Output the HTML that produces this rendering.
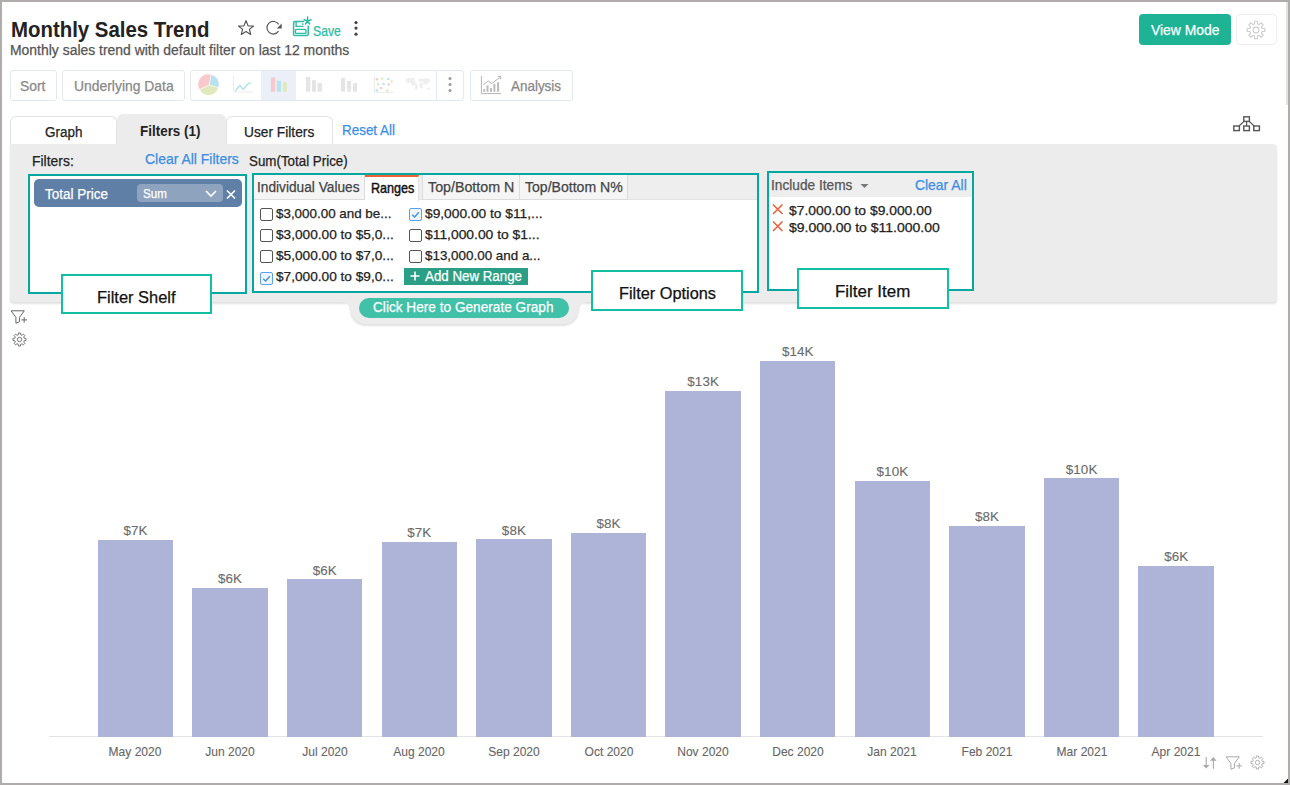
<!DOCTYPE html>
<html><head><meta charset="utf-8"><style>
html,body{margin:0;padding:0;}
body{width:1290px;height:785px;position:relative;overflow:hidden;background:#fff;font-family:"Liberation Sans", sans-serif;}
.t{position:absolute;white-space:nowrap;line-height:1;-webkit-text-stroke:0.25px currentColor;}
.c{text-align:center;}
#frame{position:absolute;left:0;top:0;width:1290px;height:785px;box-sizing:border-box;border:2px solid #b1acac;pointer-events:none;}
</style></head><body>
<div class="t" style="left:11px;top:18.00px;font-size:22.86px;color:#222;font-weight:bold;letter-spacing:0.000px;transform:scaleX(0.8925);transform-origin:0 0;-webkit-text-stroke:0;">Monthly Sales Trend</div>
<div class="t" style="left:10px;top:42.70px;font-size:14.29px;color:#555;font-weight:normal;letter-spacing:0.000px;transform:scaleX(0.9758);transform-origin:0 0;">Monthly sales trend with default filter on last 12 months</div>
<svg style="position:absolute;left:232px;top:15px" width="28" height="25" viewBox="232 15 28 25"><path d="M246 20.6 L248.1 25.9 L253.5 26 L249.4 29.4 L250.7 34.4 L246 31.5 L241.3 34.4 L242.6 29.4 L238.5 26 L243.9 25.9 Z" fill="none" stroke="#555" stroke-width="1.2" stroke-linejoin="round"/></svg>
<svg style="position:absolute;left:260px;top:17px" width="28" height="22" viewBox="260 17 28 22"><path d="M278.5 31.2 A6.3 6.3 0 1 1 278.6 24.4" fill="none" stroke="#555" stroke-width="1.2"/><path d="M281.7 23.6 L281.7 28.6 L276.8 28.6 Z" fill="#555"/></svg>
<svg style="position:absolute;left:288px;top:12px" width="28" height="28" viewBox="288 12 28 28"><path d="M304.2 21.6 H294.6 Q293.6 21.6 293.6 22.6 V34.4 Q293.6 35.4 294.6 35.4 H307.2 Q308.2 35.4 308.2 34.4 V25.4" fill="none" stroke="#2cbca5" stroke-width="1.5"/><path d="M296.1 21.6 V26.4 H303.6" fill="none" stroke="#2cbca5" stroke-width="1.4"/><circle cx="302.7" cy="24.1" r="0.9" fill="#2cbca5"/><rect x="295.4" y="29.4" width="10.6" height="4" rx="1" fill="none" stroke="#2cbca5" stroke-width="1.4"/><path d="M307.6 17.1 V21 M307.6 21 L304.1 19.8 M307.6 21 L311.1 19.8 M307.6 21 L305.5 24 M307.6 21 L309.7 24" stroke="#2cbca5" stroke-width="1.5" stroke-linecap="round"/></svg>
<div class="t" style="left:313px;top:24.00px;font-size:14.14px;color:#2cbca5;font-weight:normal;letter-spacing:0.000px;transform:scaleX(0.8656);transform-origin:0 0;">Save</div>
<svg style="position:absolute;left:353px;top:20px" width="6" height="17" viewBox="0 0 6 17"><circle cx="3" cy="2.6" r="1.6" fill="#444"/><circle cx="3" cy="8.1" r="1.6" fill="#444"/><circle cx="3" cy="14.2" r="1.6" fill="#444"/></svg>
<div style="position:absolute;left:1139px;top:14px;width:92px;height:31px;background:#1db394;border-radius:4px"></div>
<div class="t" style="left:1150.6px;top:23.00px;font-size:14.29px;color:#fff;font-weight:normal;letter-spacing:0.000px;transform:scaleX(0.9725);transform-origin:0 0;">View Mode</div>
<div style="position:absolute;left:1236px;top:14px;width:41px;height:31px;border:1px solid #eceef5;border-radius:4px;box-sizing:border-box"></div>
<svg style="position:absolute;left:1245.2px;top:18.6px" width="22" height="22" viewBox="0 0 22 22"><path d="M17.11 9.48 L19.78 9.54 L19.78 12.46 L17.11 12.52 L16.40 14.25 L18.24 16.17 L16.17 18.24 L14.25 16.40 L12.52 17.11 L12.46 19.78 L9.54 19.78 L9.48 17.11 L7.75 16.40 L5.83 18.24 L3.76 16.17 L5.60 14.25 L4.89 12.52 L2.22 12.46 L2.22 9.54 L4.89 9.48 L5.60 7.75 L3.76 5.83 L5.83 3.76 L7.75 5.60 L9.48 4.89 L9.54 2.22 L12.46 2.22 L12.52 4.89 L14.25 5.60 L16.17 3.76 L18.24 5.83 L16.40 7.75 Z" fill="none" stroke="#cdcdcd" stroke-width="1.1" stroke-linejoin="round"/><circle cx="11" cy="11" r="2.9" fill="none" stroke="#cdcdcd" stroke-width="1.1"/></svg>
<div style="position:absolute;left:10px;top:70px;width:47px;height:31px;border:1px solid #e3e8f3;border-radius:3px;box-sizing:border-box;background:#fff"></div>
<div class="t" style="left:20.2px;top:78.50px;font-size:14.43px;color:#888;font-weight:normal;letter-spacing:0.000px;transform:scaleX(0.9635);transform-origin:0 0;">Sort</div>
<div style="position:absolute;left:62px;top:70px;width:123px;height:31px;border:1px solid #e3e8f3;border-radius:3px;box-sizing:border-box;background:#fff"></div>
<div class="t" style="left:73.6px;top:78.50px;font-size:14.43px;color:#888;font-weight:normal;letter-spacing:0.000px;transform:scaleX(0.9635);transform-origin:0 0;">Underlying Data</div>
<div style="position:absolute;left:190px;top:70px;width:274px;height:31px;border:1px solid #e3e8f3;border-radius:3px;box-sizing:border-box;background:#fff"></div>
<div style="position:absolute;left:261px;top:71px;width:35px;height:29px;background:#eaeff8"></div>
<div style="position:absolute;left:436px;top:71px;width:1px;height:29px;background:#e3e8f3"></div>
<svg style="position:absolute;left:196px;top:72px" width="26" height="26" viewBox="196 72 26 26"><path d="M209.3 84.8 L210.9 74.7 A9.9 9.9 0 0 1 218.2 87.8 Z" fill="#b8e2ee"/><path d="M209.3 84.8 L218.2 87.8 A9.9 9.9 0 0 1 199.8 89.4 Z" fill="#dfe9bb"/><path d="M209.3 84.8 L199.8 89.4 A9.9 9.9 0 0 1 210.9 74.7 Z" fill="#f8c8cb"/><path d="M209.3 84.8 L210.9 74.7 M209.3 84.8 L218.2 87.8 M209.3 84.8 L199.8 89.4" stroke="#fff" stroke-width="0.6"/></svg>
<svg style="position:absolute;left:230px;top:72px" width="26" height="24" viewBox="230 72 26 24"><path d="M233.4 76 V92.1 H252.9" fill="none" stroke="#ececec" stroke-width="1"/><path d="M235 91.2 L240 85.4 L243.2 89.4 L247.5 84.3 L250.8 82.4" fill="none" stroke="#b8e2ee" stroke-width="1.6" stroke-linejoin="round"/></svg>
<svg style="position:absolute;left:266px;top:72px" width="26" height="24" viewBox="266 72 26 24"><rect x="270.9" y="77.5" width="4.3" height="14.2" fill="#f8c8cb"/><rect x="276.8" y="80.8" width="4.2" height="10.9" fill="#b8e2ee"/><rect x="282.8" y="82.3" width="4" height="9.4" fill="#dfe9bb"/></svg>
<svg style="position:absolute;left:300px;top:72px" width="26" height="24" viewBox="300 72 26 24"><rect x="305.9" y="76.9" width="4.4" height="14.8" fill="#e4e4e4"/><rect x="311.9" y="80.2" width="4.2" height="11.5" fill="#e4e4e4"/><rect x="317.6" y="82.9" width="4.3" height="8.8" fill="#e4e4e4"/><path d="M305.9 82 H310.3 M305.9 86.5 H310.3 M311.9 85 H316.1 M317.6 87 H321.9" stroke="#ebebeb" stroke-width="0.6"/></svg>
<svg style="position:absolute;left:335px;top:72px" width="26" height="24" viewBox="335 72 26 24"><rect x="341.1" y="78" width="4" height="13.7" fill="#e4e4e4"/><rect x="347.2" y="81" width="3.8" height="10.7" fill="#e4e4e4"/><rect x="353" y="83" width="4" height="8.7" fill="#e4e4e4"/><path d="M342.9 84.3 L349.1 90.2 L354.8 84.3" stroke="#f0f0f0" stroke-width="0.8" fill="none"/></svg>
<svg style="position:absolute;left:370px;top:72px" width="26" height="24" viewBox="370 72 26 24"><path d="M374.4 76.1 V92.4 H393.4" fill="none" stroke="#e8e8e8" stroke-width="0.9"/><circle cx="376.9" cy="79.2" r="1.25" fill="#f8c8cb"/><circle cx="382.2" cy="78.6" r="1.25" fill="#dfe9bb"/><circle cx="388.3" cy="78.9" r="1.25" fill="#b8e2ee"/><circle cx="391.7" cy="81.6" r="1.25" fill="#dfe9bb"/><circle cx="378.2" cy="84.3" r="1.25" fill="#dfe9bb"/><circle cx="383.6" cy="84" r="1.25" fill="#b8e2ee"/><circle cx="388.7" cy="84.6" r="1.25" fill="#f8c8cb"/><circle cx="381.1" cy="87.9" r="1.25" fill="#f8c8cb"/><circle cx="376.9" cy="90.2" r="1.25" fill="#b8e2ee"/><circle cx="387.4" cy="90.5" r="1.25" fill="#dfe9bb"/></svg>
<svg style="position:absolute;left:403px;top:74px" width="30" height="20" viewBox="403 74 30 20"><ellipse cx="410.5" cy="80.5" rx="4.8" ry="2.6" fill="#efefef"/><ellipse cx="413.5" cy="83.5" rx="2.5" ry="2.2" fill="#efefef"/><ellipse cx="416.3" cy="86.8" rx="1.3" ry="3.2" fill="#efefef"/><ellipse cx="412" cy="78.6" rx="2.5" ry="0.8" fill="#efefef"/><ellipse cx="420.5" cy="80.2" rx="2.2" ry="1.6" fill="#efefef"/><ellipse cx="421.2" cy="85.4" rx="1.8" ry="3.0" fill="#efefef"/><ellipse cx="426" cy="80.3" rx="4.2" ry="2.2" fill="#efefef"/><ellipse cx="425.5" cy="83.2" rx="2.6" ry="1.2" fill="#efefef"/><ellipse cx="428.5" cy="88.6" rx="1.6" ry="1.2" fill="#efefef"/></svg>
<svg style="position:absolute;left:445px;top:74px" width="10" height="20" viewBox="445 74 10 20"><circle cx="450" cy="78.5" r="1.5" fill="#9a9a9a"/><circle cx="450" cy="84.5" r="1.5" fill="#9a9a9a"/><circle cx="450" cy="90.5" r="1.5" fill="#9a9a9a"/></svg>
<div style="position:absolute;left:469.5px;top:70.4px;width:103.1px;height:30.2px;border:1px solid #e3e8f3;border-radius:3px;box-sizing:border-box;background:#fff"></div>
<svg style="position:absolute;left:478px;top:73px" width="26" height="24" viewBox="478 73 26 24"><path d="M481.4 76.1 V93.6 H500.9" fill="none" stroke="#b4b4b4" stroke-width="1"/><path d="M483.4 84.7 L488.3 81 L491.6 83.5 L500.3 77.2 M497.8 76.6 H500.7 V79.3" fill="none" stroke="#b4b4b4" stroke-width="1"/><rect x="483.2" y="89.2" width="2" height="2.6" fill="#bbb"/><rect x="486.5" y="85.5" width="2" height="6.3" fill="#bbb"/><rect x="490" y="88" width="2" height="3.8" fill="#bbb"/><rect x="493.4" y="83.9" width="2" height="7.9" fill="#bbb"/><rect x="497.1" y="82.2" width="2" height="9.6" fill="#bbb"/></svg>
<div class="t" style="left:511.1px;top:78.90px;font-size:14.14px;color:#888;font-weight:normal;letter-spacing:0.000px;transform:scaleX(0.9515);transform-origin:0 0;">Analysis</div>
<div style="position:absolute;left:10px;top:115.5px;width:107px;height:30px;background:#fff;border:1px solid #e2e2e2;border-bottom:none;border-radius:6px 6px 0 0;box-sizing:border-box"></div>
<div style="position:absolute;left:117px;top:114px;width:108.5px;height:31px;background:#ececec;border-radius:6px 6px 0 0"></div>
<div style="position:absolute;left:226px;top:115.5px;width:107px;height:30px;background:#fff;border:1px solid #e2e2e2;border-bottom:none;border-radius:6px 6px 0 0;box-sizing:border-box"></div>
<div class="t" style="left:44.5px;top:125.20px;font-size:14.43px;color:#222;font-weight:normal;letter-spacing:0.000px;transform:scaleX(0.9350);transform-origin:0 0;">Graph</div>
<div class="t" style="left:140px;top:123.80px;font-size:14.86px;color:#222;font-weight:bold;letter-spacing:0.000px;transform:scaleX(0.9045);transform-origin:0 0;-webkit-text-stroke:0;">Filters (1)</div>
<div class="t" style="left:244px;top:123.90px;font-size:15.0px;color:#222;font-weight:normal;letter-spacing:0.000px;transform:scaleX(0.9169);transform-origin:0 0;">User Filters</div>
<div class="t" style="left:341.9px;top:122.80px;font-size:14.86px;color:#3a8ee6;font-weight:normal;letter-spacing:0.000px;transform:scaleX(0.9038);transform-origin:0 0;">Reset All</div>
<svg style="position:absolute;left:1230px;top:112px" width="34" height="22" viewBox="0 0 34 22"><rect x="13.8" y="4.8" width="5.6" height="4.6" fill="none" stroke="#555" stroke-width="1.4"/><rect x="3.8" y="14" width="5.6" height="4.6" fill="none" stroke="#555" stroke-width="1.4"/><rect x="13.8" y="14" width="5.6" height="4.6" fill="none" stroke="#555" stroke-width="1.4"/><rect x="23.8" y="14" width="5.6" height="4.6" fill="none" stroke="#555" stroke-width="1.4"/><path d="M16.6 9.4 V14 M14 9.4 L9 14 M19.2 9.4 L24.2 14" stroke="#555" stroke-width="1.2"/></svg>
<div style="position:absolute;left:10px;top:144px;width:1267px;height:158px;background:#ececec;border-radius:0 4px 4px 4px;box-shadow:0 2px 2px rgba(0,0,0,0.12)"></div>
<div style="position:absolute;left:350px;top:280px;width:229px;height:44px;background:#ececec;border-radius:0 0 16px 16px;box-shadow:0 2px 2px rgba(0,0,0,0.12)"></div>
<div style="position:absolute;left:344px;top:285px;width:241px;height:17px;background:#ececec"></div>
<div style="position:absolute;left:342px;top:301.5px;width:8px;height:8px;background:radial-gradient(circle 8px at 0 100%, rgba(236,236,236,0) 7.3px, #ececec 8px)"></div>
<div style="position:absolute;left:579px;top:301.5px;width:8px;height:8px;background:radial-gradient(circle 8px at 100% 100%, rgba(236,236,236,0) 7.3px, #ececec 8px)"></div>
<div style="position:absolute;left:359px;top:298px;width:210px;height:20px;background:#42c1a9;border-radius:10px"></div>
<div class="t" style="left:372.9px;top:300.20px;font-size:14.43px;color:#fff;font-weight:normal;letter-spacing:0.000px;transform:scaleX(0.9461);transform-origin:0 0;">Click Here to Generate Graph</div>
<div class="t" style="left:31.7px;top:154.20px;font-size:14.57px;color:#222;font-weight:normal;letter-spacing:0.000px;transform:scaleX(0.9563);transform-origin:0 0;">Filters:</div>
<div class="t" style="left:144.6px;top:151.60px;font-size:14.86px;color:#3a8ee6;font-weight:normal;letter-spacing:0.000px;transform:scaleX(0.9388);transform-origin:0 0;">Clear All Filters</div>
<div class="t" style="left:249.4px;top:153.80px;font-size:14.14px;color:#222;font-weight:normal;letter-spacing:0.000px;transform:scaleX(0.9454);transform-origin:0 0;">Sum(Total Price)</div>
<div style="position:absolute;left:28px;top:174px;width:219px;height:120px;background:#fff;border:2px solid #05a8a0;box-sizing:border-box"></div>
<div style="position:absolute;left:34.3px;top:179px;width:207.5px;height:27.7px;background:#5f7fa6;border-radius:5px"></div>
<div class="t" style="left:45.3px;top:186.00px;font-size:15.43px;color:#fff;font-weight:normal;letter-spacing:0.000px;transform:scaleX(0.8759);transform-origin:0 0;">Total Price</div>
<div style="position:absolute;left:137px;top:184px;width:86px;height:18px;background:#8ea3bd;border-radius:4px"></div>
<div class="t" style="left:142.5px;top:186.80px;font-size:13.0px;color:#fff;font-weight:normal;letter-spacing:0.000px;transform:scaleX(0.8941);transform-origin:0 0;">Sum</div>
<svg style="position:absolute;left:204px;top:189px" width="14" height="9" viewBox="0 0 14 9"><path d="M2 2 L7 7 L12 2" fill="none" stroke="#fff" stroke-width="1.6"/></svg>
<svg style="position:absolute;left:225px;top:189px" width="12" height="11" viewBox="0 0 12 11"><path d="M2 1.5 L10 9.5 M10 1.5 L2 9.5" fill="none" stroke="#fff" stroke-width="1.6"/></svg>
<div style="position:absolute;left:252px;top:173px;width:507px;height:120px;background:#fff;border:2px solid #05a8a0;box-sizing:border-box"></div>
<div style="position:absolute;left:254px;top:175px;width:503px;height:25px;background:#eeeeee;border-bottom:1px solid #e4e4e4;box-sizing:border-box"></div>
<div style="position:absolute;left:254px;top:175px;width:111px;height:25px;background:#f5f5f5;border-right:1px solid #dcdcdc;border-bottom:1px solid #dcdcdc;box-sizing:border-box"></div>
<div style="position:absolute;left:365px;top:175px;width:54px;height:26px;background:#fff;border-top:2px solid #ee6236;border-right:1px solid #e2e2e2;box-sizing:border-box"></div>
<div style="position:absolute;left:422px;top:175px;width:98px;height:25px;background:#f5f5f5;border:1px solid #dcdcdc;border-top:none;box-sizing:border-box"></div>
<div style="position:absolute;left:520px;top:175px;width:108px;height:25px;background:#f5f5f5;border:1px solid #dcdcdc;border-top:none;border-left:none;box-sizing:border-box"></div>
<div class="t" style="left:256.7px;top:180.00px;font-size:14.43px;color:#444;font-weight:normal;letter-spacing:0.000px;transform:scaleX(0.9497);transform-origin:0 0;">Individual Values</div>
<div class="t" style="left:370.6px;top:181.00px;font-size:14.57px;color:#111;font-weight:normal;letter-spacing:0.000px;transform:scaleX(0.8642);transform-origin:0 0;-webkit-text-stroke:0.45px currentColor;">Ranges</div>
<div class="t" style="left:428px;top:180.00px;font-size:14.43px;color:#444;font-weight:normal;letter-spacing:0.000px;transform:scaleX(0.9883);transform-origin:0 0;">Top/Bottom N</div>
<div class="t" style="left:525px;top:180.00px;font-size:14.43px;color:#444;font-weight:normal;letter-spacing:0.000px;transform:scaleX(0.9746);transform-origin:0 0;">Top/Bottom N%</div>
<div style="position:absolute;left:260px;top:208.1px;width:13px;height:13px;border:1px solid #555;border-radius:2px;box-sizing:border-box;background:#fff"></div>
<div class="t" style="left:276.2px;top:206.60px;font-size:13.57px;color:#222;font-weight:normal;letter-spacing:0.000px;transform:scaleX(0.9875);transform-origin:0 0;">$3,000.00 and be...</div>
<div style="position:absolute;left:260px;top:229.3px;width:13px;height:13px;border:1px solid #555;border-radius:2px;box-sizing:border-box;background:#fff"></div>
<div class="t" style="left:276.2px;top:227.80px;font-size:13.57px;color:#222;font-weight:normal;letter-spacing:0.000px;transform:scaleX(1.0073);transform-origin:0 0;">$3,000.00 to $5,0...</div>
<div style="position:absolute;left:260px;top:250.3px;width:13px;height:13px;border:1px solid #555;border-radius:2px;box-sizing:border-box;background:#fff"></div>
<div class="t" style="left:276.2px;top:248.80px;font-size:13.57px;color:#222;font-weight:normal;letter-spacing:0.000px;transform:scaleX(1.0073);transform-origin:0 0;">$5,000.00 to $7,0...</div>
<div style="position:absolute;left:260px;top:271.5px;width:13px;height:13px;border:1px solid #5aa0ea;border-radius:2px;box-sizing:border-box;background:#eef5ff"></div>
<svg style="position:absolute;left:260px;top:271.5px" width="13" height="13" viewBox="0 0 13 13"><path d="M3.2 6.8 L5.6 9 L9.8 4.2" fill="none" stroke="#3a8ee6" stroke-width="1.3"/></svg>
<div class="t" style="left:276.2px;top:270.00px;font-size:13.57px;color:#222;font-weight:normal;letter-spacing:0.000px;transform:scaleX(1.0073);transform-origin:0 0;">$7,000.00 to $9,0...</div>
<div style="position:absolute;left:409px;top:208.1px;width:13px;height:13px;border:1px solid #5aa0ea;border-radius:2px;box-sizing:border-box;background:#eef5ff"></div>
<svg style="position:absolute;left:409px;top:208.1px" width="13" height="13" viewBox="0 0 13 13"><path d="M3.2 6.8 L5.6 9 L9.8 4.2" fill="none" stroke="#3a8ee6" stroke-width="1.3"/></svg>
<div class="t" style="left:425.4px;top:206.60px;font-size:13.57px;color:#222;font-weight:normal;letter-spacing:0.000px;transform:scaleX(1.0143);transform-origin:0 0;">$9,000.00 to $11,...</div>
<div style="position:absolute;left:409px;top:229.3px;width:13px;height:13px;border:1px solid #555;border-radius:2px;box-sizing:border-box;background:#fff"></div>
<div class="t" style="left:425.4px;top:227.80px;font-size:13.57px;color:#222;font-weight:normal;letter-spacing:0.000px;transform:scaleX(1.0216);transform-origin:0 0;">$11,000.00 to $1...</div>
<div style="position:absolute;left:409px;top:250.3px;width:13px;height:13px;border:1px solid #555;border-radius:2px;box-sizing:border-box;background:#fff"></div>
<div class="t" style="left:425.4px;top:248.80px;font-size:13.57px;color:#222;font-weight:normal;letter-spacing:0.000px;transform:scaleX(0.9884);transform-origin:0 0;">$13,000.00 and a...</div>
<div style="position:absolute;left:404px;top:267.5px;width:124px;height:17.5px;background:#2a9f85"></div>
<svg style="position:absolute;left:408px;top:269px" width="14" height="14" viewBox="0 0 14 14"><path d="M7 2.5 V11.5 M2.5 7 H11.5" stroke="#fff" stroke-width="1.6"/></svg>
<div class="t" style="left:425px;top:268.80px;font-size:14.0px;color:#fff;font-weight:normal;letter-spacing:0.000px;transform:scaleX(0.9514);transform-origin:0 0;">Add New Range</div>
<div style="position:absolute;left:767px;top:171px;width:207px;height:120px;background:#fff;border:2px solid #05a8a0;box-sizing:border-box"></div>
<div style="position:absolute;left:769px;top:173px;width:203px;height:23.5px;background:#eeeeee"></div>
<div class="t" style="left:771.4px;top:177.50px;font-size:14.14px;color:#555;font-weight:normal;letter-spacing:0.000px;transform:scaleX(0.9691);transform-origin:0 0;">Include Items</div>
<svg style="position:absolute;left:859px;top:183px" width="11" height="6" viewBox="0 0 11 6"><path d="M1.5 1 L9.5 1 L5.5 5 Z" fill="#777"/></svg>
<div class="t" style="left:914.6px;top:177.50px;font-size:14.14px;color:#3a8ee6;font-weight:normal;letter-spacing:0.000px;transform:scaleX(0.9838);transform-origin:0 0;">Clear All</div>
<svg style="position:absolute;left:771px;top:203px" width="13" height="12" viewBox="0 0 13 12"><path d="M2 1.5 L11.5 11 M11.5 1.5 L2 11" stroke="#e8643c" stroke-width="1.6"/></svg>
<svg style="position:absolute;left:771px;top:220px" width="13" height="12" viewBox="0 0 13 12"><path d="M2 1.5 L11.5 11 M11.5 1.5 L2 11" stroke="#e8643c" stroke-width="1.6"/></svg>
<div class="t" style="left:788.7px;top:205.20px;font-size:12.86px;color:#222;font-weight:normal;letter-spacing:0.000px;transform:scaleX(1.0779);transform-origin:0 0;">$7.000.00 to $9.000.00</div>
<div class="t" style="left:788.7px;top:222.00px;font-size:12.86px;color:#222;font-weight:normal;letter-spacing:0.000px;transform:scaleX(1.0889);transform-origin:0 0;">$9.000.00 to $11.000.00</div>
<div style="position:absolute;left:61px;top:274px;width:150.5px;height:40px;background:#fff;border:2px solid #12bea4;box-sizing:border-box"></div>
<div class="t" style="left:96.7px;top:289.60px;font-size:16.0px;color:#111;font-weight:normal;letter-spacing:0.000px;transform:scaleX(1.0278);transform-origin:0 0;">Filter Shelf</div>
<div style="position:absolute;left:591px;top:270px;width:152px;height:41px;background:#fff;border:2px solid #12bea4;box-sizing:border-box"></div>
<div class="t" style="left:618.5px;top:285.50px;font-size:15.71px;color:#111;font-weight:normal;letter-spacing:0.000px;transform:scaleX(1.0383);transform-origin:0 0;">Filter Options</div>
<div style="position:absolute;left:797px;top:268px;width:152px;height:40.5px;background:#fff;border:2px solid #12bea4;box-sizing:border-box"></div>
<div class="t" style="left:835.3px;top:282.70px;font-size:16.14px;color:#111;font-weight:normal;letter-spacing:0.000px;transform:scaleX(1.0496);transform-origin:0 0;">Filter Item</div>
<svg style="position:absolute;left:10px;top:309.5px" width="18" height="15" viewBox="0 0 18 15"><path d="M1.05 0.8 H14.3 L9.5 7.3 V11.8 L5.9 13.2 V7.3 Z" fill="none" stroke="#666" stroke-width="1" stroke-linejoin="round"/><path d="M11.4 9.9 H17 M14.2 7.1 V12.7" stroke="#666" stroke-width="1"/></svg>
<svg style="position:absolute;left:10.6px;top:331.3px" width="17" height="17" viewBox="0 0 17 17"><path d="M13.26 7.32 L15.01 7.42 L15.01 9.58 L13.26 9.68 L12.70 11.03 L13.87 12.34 L12.34 13.87 L11.03 12.70 L9.68 13.26 L9.58 15.01 L7.42 15.01 L7.32 13.26 L5.97 12.70 L4.66 13.87 L3.13 12.34 L4.30 11.03 L3.74 9.68 L1.99 9.58 L1.99 7.42 L3.74 7.32 L4.30 5.97 L3.13 4.66 L4.66 3.13 L5.97 4.30 L7.32 3.74 L7.42 1.99 L9.58 1.99 L9.68 3.74 L11.03 4.30 L12.34 3.13 L13.87 4.66 L12.70 5.97 Z" fill="none" stroke="#666" stroke-width="0.9" stroke-linejoin="round"/><circle cx="8.5" cy="8.5" r="2.2" fill="none" stroke="#666" stroke-width="0.9"/></svg>
<div style="position:absolute;left:49px;top:736px;width:1214px;height:1px;background:#e4e4e4"></div>
<div style="position:absolute;left:97.7px;top:539.8px;width:75.5px;height:197.2px;background:#aeb4d8"></div>
<div class="t c" style="left:85.45px;width:100px;top:524.10px;font-size:13.4px;letter-spacing:0.1px;text-indent:0.1px;color:#6a6a6a;-webkit-text-stroke:0.1px currentColor">$7K</div>
<div class="t c" style="left:85.45px;width:100px;top:745.50px;font-size:12.6px;color:#666;-webkit-text-stroke:0.1px currentColor;transform:scaleX(0.955)">May 2020</div>
<div style="position:absolute;left:192.31px;top:587.6px;width:75.5px;height:149.4px;background:#aeb4d8"></div>
<div class="t c" style="left:180.06px;width:100px;top:571.90px;font-size:13.4px;letter-spacing:0.1px;text-indent:0.1px;color:#6a6a6a;-webkit-text-stroke:0.1px currentColor">$6K</div>
<div class="t c" style="left:180.06px;width:100px;top:745.50px;font-size:12.6px;color:#666;-webkit-text-stroke:0.1px currentColor;transform:scaleX(0.955)">Jun 2020</div>
<div style="position:absolute;left:286.92px;top:579.2px;width:75.5px;height:157.8px;background:#aeb4d8"></div>
<div class="t c" style="left:274.67px;width:100px;top:563.50px;font-size:13.4px;letter-spacing:0.1px;text-indent:0.1px;color:#6a6a6a;-webkit-text-stroke:0.1px currentColor">$6K</div>
<div class="t c" style="left:274.67px;width:100px;top:745.50px;font-size:12.6px;color:#666;-webkit-text-stroke:0.1px currentColor;transform:scaleX(0.955)">Jul 2020</div>
<div style="position:absolute;left:381.53px;top:541.6px;width:75.5px;height:195.4px;background:#aeb4d8"></div>
<div class="t c" style="left:369.28px;width:100px;top:525.90px;font-size:13.4px;letter-spacing:0.1px;text-indent:0.1px;color:#6a6a6a;-webkit-text-stroke:0.1px currentColor">$7K</div>
<div class="t c" style="left:369.28px;width:100px;top:745.50px;font-size:12.6px;color:#666;-webkit-text-stroke:0.1px currentColor;transform:scaleX(0.955)">Aug 2020</div>
<div style="position:absolute;left:476.14px;top:539.3px;width:75.5px;height:197.7px;background:#aeb4d8"></div>
<div class="t c" style="left:463.89px;width:100px;top:523.60px;font-size:13.4px;letter-spacing:0.1px;text-indent:0.1px;color:#6a6a6a;-webkit-text-stroke:0.1px currentColor">$8K</div>
<div class="t c" style="left:463.89px;width:100px;top:745.50px;font-size:12.6px;color:#666;-webkit-text-stroke:0.1px currentColor;transform:scaleX(0.955)">Sep 2020</div>
<div style="position:absolute;left:570.75px;top:532.7px;width:75.5px;height:204.3px;background:#aeb4d8"></div>
<div class="t c" style="left:558.50px;width:100px;top:517.00px;font-size:13.4px;letter-spacing:0.1px;text-indent:0.1px;color:#6a6a6a;-webkit-text-stroke:0.1px currentColor">$8K</div>
<div class="t c" style="left:558.50px;width:100px;top:745.50px;font-size:12.6px;color:#666;-webkit-text-stroke:0.1px currentColor;transform:scaleX(0.955)">Oct 2020</div>
<div style="position:absolute;left:665.36px;top:390.9px;width:75.5px;height:346.1px;background:#aeb4d8"></div>
<div class="t c" style="left:653.11px;width:100px;top:375.20px;font-size:13.4px;letter-spacing:0.1px;text-indent:0.1px;color:#6a6a6a;-webkit-text-stroke:0.1px currentColor">$13K</div>
<div class="t c" style="left:653.11px;width:100px;top:745.50px;font-size:12.6px;color:#666;-webkit-text-stroke:0.1px currentColor;transform:scaleX(0.955)">Nov 2020</div>
<div style="position:absolute;left:759.97px;top:361px;width:75.5px;height:376px;background:#aeb4d8"></div>
<div class="t c" style="left:747.72px;width:100px;top:345.30px;font-size:13.4px;letter-spacing:0.1px;text-indent:0.1px;color:#6a6a6a;-webkit-text-stroke:0.1px currentColor">$14K</div>
<div class="t c" style="left:747.72px;width:100px;top:745.50px;font-size:12.6px;color:#666;-webkit-text-stroke:0.1px currentColor;transform:scaleX(0.955)">Dec 2020</div>
<div style="position:absolute;left:854.58px;top:481px;width:75.5px;height:256px;background:#aeb4d8"></div>
<div class="t c" style="left:842.33px;width:100px;top:465.30px;font-size:13.4px;letter-spacing:0.1px;text-indent:0.1px;color:#6a6a6a;-webkit-text-stroke:0.1px currentColor">$10K</div>
<div class="t c" style="left:842.33px;width:100px;top:745.50px;font-size:12.6px;color:#666;-webkit-text-stroke:0.1px currentColor;transform:scaleX(0.955)">Jan 2021</div>
<div style="position:absolute;left:949.19px;top:525.5px;width:75.5px;height:211.5px;background:#aeb4d8"></div>
<div class="t c" style="left:936.94px;width:100px;top:509.80px;font-size:13.4px;letter-spacing:0.1px;text-indent:0.1px;color:#6a6a6a;-webkit-text-stroke:0.1px currentColor">$8K</div>
<div class="t c" style="left:936.94px;width:100px;top:745.50px;font-size:12.6px;color:#666;-webkit-text-stroke:0.1px currentColor;transform:scaleX(0.955)">Feb 2021</div>
<div style="position:absolute;left:1043.8px;top:478.3px;width:75.5px;height:258.7px;background:#aeb4d8"></div>
<div class="t c" style="left:1031.55px;width:100px;top:462.60px;font-size:13.4px;letter-spacing:0.1px;text-indent:0.1px;color:#6a6a6a;-webkit-text-stroke:0.1px currentColor">$10K</div>
<div class="t c" style="left:1031.55px;width:100px;top:745.50px;font-size:12.6px;color:#666;-webkit-text-stroke:0.1px currentColor;transform:scaleX(0.955)">Mar 2021</div>
<div style="position:absolute;left:1138.41px;top:566px;width:75.5px;height:171px;background:#aeb4d8"></div>
<div class="t c" style="left:1126.16px;width:100px;top:550.30px;font-size:13.4px;letter-spacing:0.1px;text-indent:0.1px;color:#6a6a6a;-webkit-text-stroke:0.1px currentColor">$6K</div>
<div class="t c" style="left:1126.16px;width:100px;top:745.50px;font-size:12.6px;color:#666;-webkit-text-stroke:0.1px currentColor;transform:scaleX(0.955)">Apr 2021</div>
<svg style="position:absolute;left:1200px;top:754px" width="20" height="17" viewBox="1200 754 20 17"><path d="M1206.2 756.9 V765.5 M1213.4 768.7 V760" stroke="#a8a8a8" stroke-width="1.1"/><path d="M1202.9 764.9 H1209.5 L1206.2 768.6 Z M1209.9 760.8 H1216.5 L1213.4 756.9 Z" fill="#a8a8a8"/></svg>
<svg style="position:absolute;left:1225.3px;top:755.6px" width="18" height="15" viewBox="0 0 18 15"><path d="M1.05 0.8 H14.3 L9.5 7.3 V11.8 L5.9 13.2 V7.3 Z" fill="none" stroke="#aaa" stroke-width="1" stroke-linejoin="round"/><path d="M11.4 9.9 H17 M14.2 7.1 V12.7" stroke="#aaa" stroke-width="1"/></svg>
<svg style="position:absolute;left:1249.2px;top:754.3px" width="17" height="17" viewBox="0 0 17 17"><path d="M13.26 7.32 L15.01 7.42 L15.01 9.58 L13.26 9.68 L12.70 11.03 L13.87 12.34 L12.34 13.87 L11.03 12.70 L9.68 13.26 L9.58 15.01 L7.42 15.01 L7.32 13.26 L5.97 12.70 L4.66 13.87 L3.13 12.34 L4.30 11.03 L3.74 9.68 L1.99 9.58 L1.99 7.42 L3.74 7.32 L4.30 5.97 L3.13 4.66 L4.66 3.13 L5.97 4.30 L7.32 3.74 L7.42 1.99 L9.58 1.99 L9.68 3.74 L11.03 4.30 L12.34 3.13 L13.87 4.66 L12.70 5.97 Z" fill="none" stroke="#aaa" stroke-width="0.9" stroke-linejoin="round"/><circle cx="8.5" cy="8.5" r="2.2" fill="none" stroke="#aaa" stroke-width="0.9"/></svg>
<div style="position:absolute;left:1286px;top:2px;width:1.5px;height:103px;background:#e2e2e2"></div>
<svg style="position:absolute;left:1283px;top:778px" width="6" height="6" viewBox="0 0 6 6"><path d="M5.5 0 V5.5 H0 Z" fill="#111"/></svg>
<div id="frame"></div>
</body></html>
